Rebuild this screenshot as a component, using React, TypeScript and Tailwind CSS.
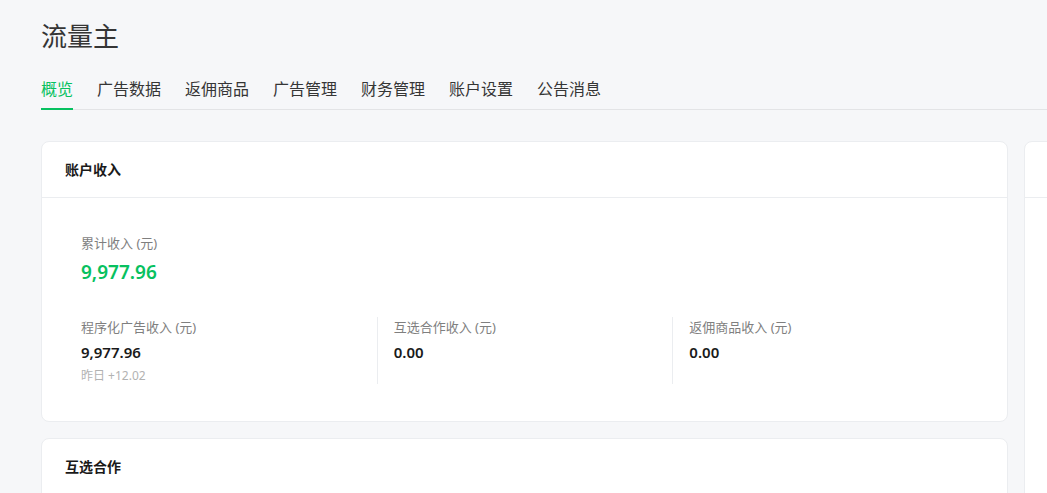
import React from "react";

const tabs = ["概览", "广告数据", "返佣商品", "广告管理", "财务管理", "账户设置", "公告消息"];

function Card({ title, children }: { title: string; children?: React.ReactNode }) {
  return (
    <div className="bg-white border border-[#ebedf0] rounded-lg">
      <div className="h-[56px] flex items-center px-[23px] border-b border-[#ebedf0]">
        <span className="text-[14px] font-semibold text-[#1a1a1a]">{title}</span>
      </div>
      {children}
    </div>
  );
}

export default function App() {
  return (
    <div
      className="w-[1047px] h-[493px] overflow-hidden bg-[#f6f7f9] pl-[41px]"
      style={{ fontFamily: '"Noto Sans", "Noto Sans CJK SC", sans-serif' }}
    >
      <div className="pt-[18px] text-[26px] leading-[36px] text-[#353535]">流量主</div>
      <div className="mt-[17px] flex gap-6 border-b border-[#e3e4e6]">
        {tabs.map((t, i) => (
          <div
            key={t}
            className={
              i === 0
                ? "pt-[6px] pb-[7px] leading-[24px] text-[16px] border-b-2 border-[#07c160] text-[#07c160] -mb-px"
                : "pt-[6px] pb-[7px] leading-[24px] text-[16px] border-b-2 border-transparent text-[#353535] -mb-px"
            }
          >
            {t}
          </div>
        ))}
      </div>
      <div className="mt-[31px] flex gap-4">
        <div className="w-[967px] shrink-0 flex flex-col gap-4">
          <Card title="账户收入">
            <div className="pl-[39px] pr-[39px] pt-[35px] pb-[37px]">
              <div className="text-[13px] leading-[20px] text-[#7f7f7f]">累计收入 (元)</div>
              <div className="mt-[5px] text-[19px] leading-[28px] font-semibold text-[#07c160]">9,977.96</div>
              <div className="mt-[31px] grid grid-cols-3">
                <div className="h-[67px]">
                  <div className="text-[13px] leading-[20px] text-[#7f7f7f]">程序化广告收入 (元)</div>
                  <div className="mt-[4px] text-[15px] leading-[22px] font-semibold text-[#1a1a1a]">9,977.96</div>
                  <div className="mt-[4px] text-[12px] leading-[18px] text-[#b2b2b2]">昨日 +12.02</div>
                </div>
                <div className="h-[67px] border-l border-[#ebedf0] pl-4">
                  <div className="text-[13px] leading-[20px] text-[#7f7f7f]">互选合作收入 (元)</div>
                  <div className="mt-[4px] text-[15px] leading-[22px] font-semibold text-[#1a1a1a]">0.00</div>
                </div>
                <div className="h-[67px] border-l border-[#ebedf0] pl-4">
                  <div className="text-[13px] leading-[20px] text-[#7f7f7f]">返佣商品收入 (元)</div>
                  <div className="mt-[4px] text-[15px] leading-[22px] font-semibold text-[#1a1a1a]">0.00</div>
                </div>
              </div>
            </div>
          </Card>
          <Card title="互选合作">
            <div className="h-[200px]" />
          </Card>
        </div>
        <div className="w-[300px] shrink-0">
          <Card title="">
            <div className="h-[400px]" />
          </Card>
        </div>
      </div>
    </div>
  );
}
